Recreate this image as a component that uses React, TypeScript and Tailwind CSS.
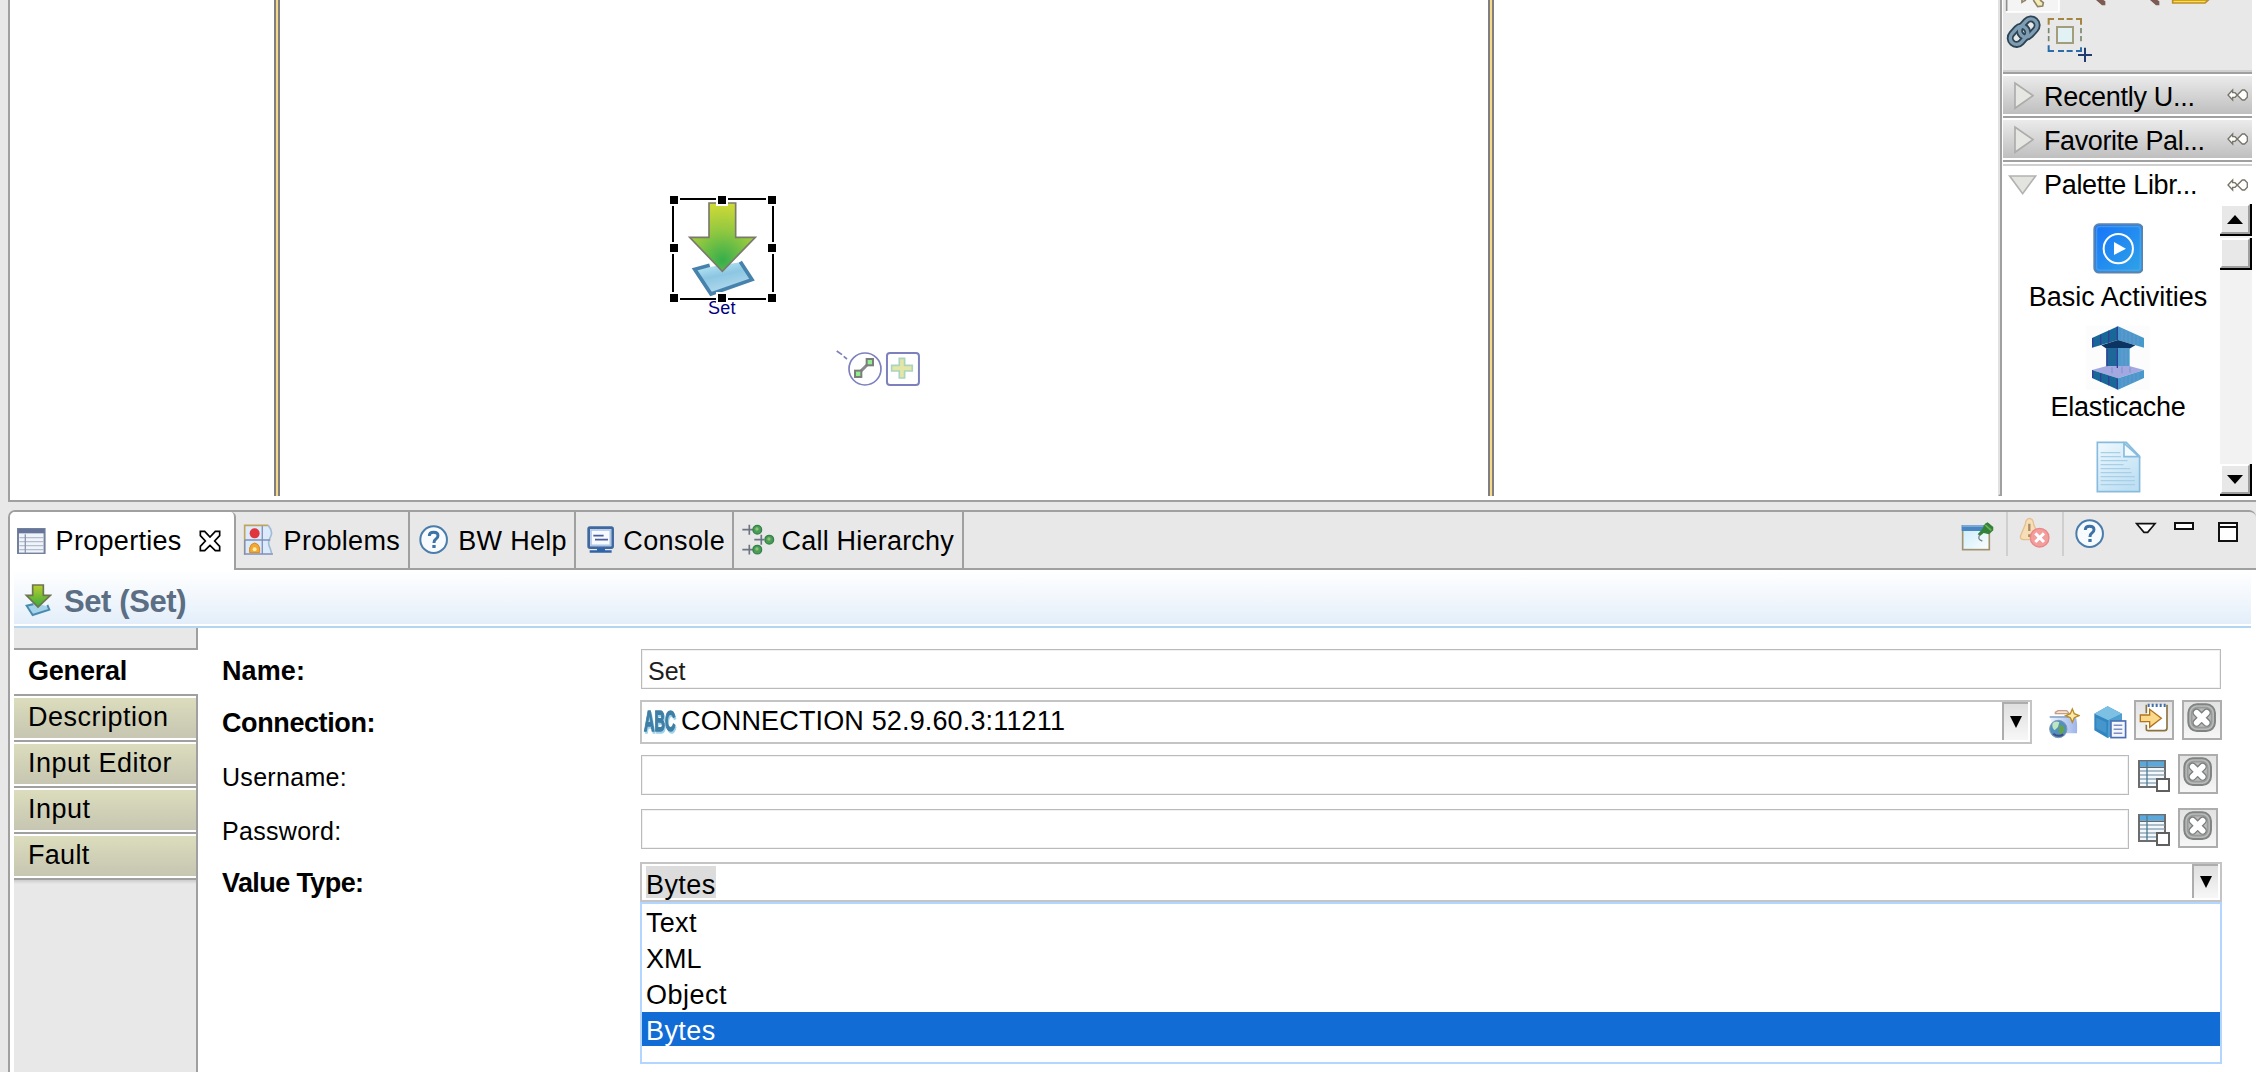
import type { ReactNode } from "react";

type IconProps = { box: string; w: number; h: number; className?: string; children: ReactNode };

function Icon({ box, w, h, className, children }: IconProps) {
  return (
    <svg viewBox={box} width={w} height={h} className={`block shrink-0 ${className ?? ""}`}>
      {children}
    </svg>
  );
}

/* ---------- canvas ---------- */

function SetArrowIcon({ w, h }: { w: number; h: number }) {
  return (
    <Icon box="140 62 216 292" w={w} h={h}>
      <defs>
        <radialGradient id="arrowFill" gradientUnits="userSpaceOnUse" cx="247" cy="240" r="180">
          <stop offset="0" stopColor="#35ae4c" />
          <stop offset="0.5" stopColor="#92c840" />
          <stop offset="1" stopColor="#d6dc35" />
        </radialGradient>
        <linearGradient id="sheetFill" x1="0" y1="0" x2="0.4" y2="1">
          <stop offset="0" stopColor="#c6f1fb" />
          <stop offset="0.5" stopColor="#8cc6e2" />
          <stop offset="1" stopColor="#b4daee" />
        </linearGradient>
      </defs>
      <path d="M163 267L300 246L335 298L212 341Z" fill="url(#sheetFill)" />
      <path d="M208 255L163 267L212 341L335 298L300 244" fill="none" stroke="#4682ab" strokeWidth="11" />
      <path d="M206 68H286V171H345L246 273L148 171H206Z" fill="url(#arrowFill)" stroke="#7a7a6c" strokeWidth="5" />
    </Icon>
  );
}

function Handle({ className }: { className: string }) {
  return <i className={`absolute box-content size-2 border-2 border-white bg-black ${className}`} />;
}

function SetNode() {
  return (
    <div className="absolute left-[672px] top-[198px] h-[102px] w-[102px] border-2 border-black">
      <div className="absolute left-[13px] top-[1px]">
        <SetArrowIcon w={72} h={97.3} />
      </div>
      <span className="absolute left-[34px] top-[98px] text-[18px] leading-5 tracking-[0.2px] text-[#00007f]">Set</span>
      <Handle className="-left-[6px] -top-[6px]" />
      <Handle className="left-[42px] -top-[6px]" />
      <Handle className="left-[92px] -top-[6px]" />
      <Handle className="-left-[6px] top-[42px]" />
      <Handle className="left-[92px] top-[42px]" />
      <Handle className="-left-[6px] top-[92px]" />
      <Handle className="left-[42px] top-[92px]" />
      <Handle className="left-[92px] top-[92px]" />
    </div>
  );
}

function NodeActions() {
  return (
    <div className="absolute left-[836px] top-[350px]">
      <Icon box="588 510 256 112" w={85.3} h={37.3}>
        <path d="M590 513L606 524M611 529L621 537" stroke="#7d80bd" strokeWidth="5" />
        <circle cx="675" cy="567" r="48" fill="#fff" stroke="#7d80bd" strokeWidth="5" />
        <path d="M655 581L690 546" stroke="#8a8a8a" strokeWidth="9" />
        <rect x="645" y="572" width="19" height="19" fill="#8df08d" stroke="#7c7c7c" strokeWidth="6" />
        <rect x="680" y="537" width="19" height="19" fill="#8df08d" stroke="#7c7c7c" strokeWidth="6" />
        <rect x="741" y="519" width="96" height="96" rx="9" fill="#fff" stroke="#7d80bd" strokeWidth="6" />
        <path
          d="M778 535H794V556H817V573H794V594H778V573H755V556H778Z"
          fill="#e4e6a6"
          stroke="#aad4c0"
          strokeWidth="5"
        />
      </Icon>
    </div>
  );
}

function LaneLine() {
  return <div className="h-[496px] w-[6px] shrink-0 border-x-2 border-[#808080] bg-[#f5d88c]" />;
}

/* ---------- palette ---------- */

function PaletteToolbar() {
  return (
    <div className="h-[70px] bg-[#e8e8e8]">
      <Icon box="39 0 747 210" w={249} h={70}>
        <path d="M51 0V36H207V0" fill="#f4f4f4" stroke="#fff" strokeWidth="5" />
        <path d="M50 0V33" stroke="#8f8f8f" strokeWidth="5" />
        <path d="M96 0V7L104 2L108 0M130 0L143 20L158 18L160 8L150 0" fill="#f5ecb4" stroke="#8d846c" strokeWidth="5" />
        <path d="M318 0L336 16H346V4L340 0ZM480 0L498 16H508V4L502 0Z" fill="#7d5a52" />
        <path d="M548 0V9H645L655 0Z" fill="#ffdf3f" stroke="#bd8e28" strokeWidth="5" />
        <g fill="none">
          <g stroke="#2c4454" strokeWidth="21">
            <rect x="-19" y="-30" width="38" height="60" rx="19" transform="translate(87 106) rotate(42)" />
            <rect x="-19" y="-30" width="38" height="60" rx="19" transform="translate(115 84) rotate(42)" />
          </g>
          <g stroke="#7f9db2" strokeWidth="10">
            <rect x="-19" y="-30" width="38" height="60" rx="19" transform="translate(87 106) rotate(42)" />
            <rect x="-19" y="-30" width="38" height="60" rx="19" transform="translate(115 84) rotate(42)" />
          </g>
        </g>
        <path d="M176 74V57H192M204 57H222M230 57H248M258 57H273V74" fill="none" stroke="#a4853f" strokeWidth="6" />
        <path d="M176 84V100M273 84V100M176 108V124M273 108V124" stroke="#77866f" strokeWidth="5" />
        <path d="M176 136V153H192M204 153H222M230 153H248M258 153H273V142" fill="none" stroke="#2c6ca8" strokeWidth="6" />
        <rect x="201" y="81" width="48" height="48" fill="#e2f1f4" stroke="#a29e7b" strokeWidth="6" />
        <path d="M285 143V186M264 165H306" stroke="#213c70" strokeWidth="6" />
      </Icon>
    </div>
  );
}

function PinIcon() {
  return (
    <Icon box="707 270 64 42" w={21.3} h={14} className="ml-auto mr-[5px]">
      <path
        d="M710 291L724 276V284H731L746 299L753 306H760L768 298V284L760 276H753L731 298H724V306Z"
        fill="#fff"
        stroke="#777468"
        strokeWidth="4"
      />
    </Icon>
  );
}

function Drawer({ label, open, text }: { label: string; open?: boolean; text: string }) {
  return (
    <div
      className={`flex h-[38px] w-[250px] items-center ${open ? "bg-white" : "bg-linear-to-b from-[#ebebeb] to-[#bfbfbf]"}`}
    >
      <div className="w-[41px] shrink-0">
        {open ? (
          <Icon box="52 524 88 64" w={29.3} h={21.3} className="ml-[5px]">
            <path d="M57 530H135L96 583Z" fill="#e3e4df" stroke="#b2b2b0" strokeWidth="5" />
          </Icon>
        ) : (
          <Icon box="68 244 64 88" w={21.3} h={29.3} className="ml-[10px] mt-[2px]">
            <path d="M74 250V326L128 288Z" fill="#e6e7e2" stroke="#acacaa" strokeWidth="5" />
          </Icon>
        )}
      </div>
      <span className={`whitespace-nowrap text-[27px] ${text}`}>{label}</span>
      <PinIcon />
    </div>
  );
}

function ScrollButton({ children }: { children?: ReactNode }) {
  return (
    <div className="h-8 w-8 border-b-2 border-r-2 border-black">
      <div className="flex h-full w-full items-center justify-center border-2 border-b-[#a0a0a0] border-l-white border-r-[#a0a0a0] border-t-white bg-[#e8e8e8]">
        {children}
      </div>
    </div>
  );
}

function Scrollbar() {
  return (
    <div className="flex w-8 shrink-0 flex-col bg-[#f2f2f2]">
      <ScrollButton>
        <Icon box="0 0 16 9" w={16} h={9}>
          <path d="M0 9L8 0L16 9Z" />
        </Icon>
      </ScrollButton>
      <div className="mt-[2px]">
        <ScrollButton />
      </div>
      <div className="mt-auto">
        <ScrollButton>
          <Icon box="0 0 16 9" w={16} h={9}>
            <path d="M0 0L8 9L16 0Z" />
          </Icon>
        </ScrollButton>
      </div>
    </div>
  );
}

function BasicActivitiesIcon() {
  return (
    <Icon box="310 70 152 152" w={50.6} h={50.6}>
      <defs>
        <linearGradient id="basicFill" x1="0" y1="0" x2="1" y2="1">
          <stop offset="0" stopColor="#1674fb" />
          <stop offset="1" stopColor="#2fa4e6" />
        </linearGradient>
      </defs>
      <rect x="314" y="74" width="145" height="145" rx="14" fill="url(#basicFill)" stroke="#5d83ad" strokeWidth="6" />
      <rect x="321" y="81" width="131" height="131" rx="8" fill="none" stroke="#5aa9ef" strokeWidth="4" opacity=".6" />
      <circle cx="386" cy="147" r="44" fill="none" stroke="#fff" strokeWidth="6" />
      <path d="M373 127V166L409 147Z" fill="#fff" />
    </Icon>
  );
}

function ElasticacheIcon() {
  return (
    <Icon box="288 378 192 192" w={64} h={64}>
      <rect x="288" y="378" width="192" height="192" fill="#fcfcfc" />
      <path d="M306 414L384 379V420L306 443Z" fill="#176896" />
      <path d="M384 379L462 414V443L384 420Z" fill="#459acb" />
      <path d="M334 436L384 420L436 436L418 446H350Z" fill="#0b3463" />
      <path d="M349 444H384V506L349 500Z" fill="#1d6899" />
      <path d="M384 444H419V500L384 506Z" fill="#4a9ccd" />
      <path d="M306 510L350 498H418L462 510L384 535Z" fill="#a3a8e0" />
      <path d="M306 510L384 535V569L306 534Z" fill="#176896" />
      <path d="M462 510L384 535V569L462 534Z" fill="#459acb" />
      <path
        d="M308 414V442M332 404V435M356 392V428M382 380V420M308 511V534M332 520V545M356 528V556M382 536V568M351 446V499M382 446V504"
        stroke="#333c9c"
        strokeWidth="4"
      />
      <path
        d="M396 386V422M408 392V426M420 397V429M432 402V433M444 408V436M396 534V562M408 530V557M420 526V551M432 521V546M444 517V540M396 446V500M408 446V498M366 502V520M396 502V520M420 502V518"
        stroke="#7c90cc"
        strokeWidth="3"
      />
    </Icon>
  );
}

function DocumentIcon() {
  return (
    <Icon box="314 724 140 156" w={46.6} h={52}>
      <defs>
        <linearGradient id="docFill" x1="0" y1="0" x2="0.6" y2="1">
          <stop offset="0" stopColor="#eff9fe" />
          <stop offset="1" stopColor="#bfe0f3" />
        </linearGradient>
      </defs>
      <path d="M321 728H408L448 770V876H321Z" fill="url(#docFill)" stroke="#87bcdf" strokeWidth="5" />
      <path d="M401 730V771H446Z" fill="#f3fbff" stroke="#87bcdf" strokeWidth="5" />
      <path
        d="M331 759H390M331 771H392M331 783H412M331 795H400M331 807H420M331 819H424M331 831H434M331 843H434M331 855H434"
        stroke="#a8cfe8"
        strokeWidth="4"
      />
    </Icon>
  );
}

function Palette() {
  return (
    <div className="flex w-[258px] shrink-0 flex-col">
      <div className="flex h-[496px]">
        <div className="w-1 shrink-0 border-b-2 border-l-2 border-r-2 border-b-[#a0a0a0] border-l-[#e2e2e2] border-r-[#a0a0a0]" />
        <div className="ml-px flex w-[249px] flex-col overflow-hidden">
          <PaletteToolbar />
          <div className="h-[6px] shrink-0 border-b-2 border-t-2 border-b-white border-t-[#d0d0d0] bg-[#a0a0a0]" />
          <Drawer label="Recently U..." text="mt-[3px] leading-[38px] tracking-[-0.3px]" />
          <div className="my-[2px] h-[2px] shrink-0 bg-[#a0a0a0]" />
          <Drawer label="Favorite Pal..." text="mt-[3px] leading-[38px] tracking-[-0.4px]" />
          <div className="my-[2px] h-[2px] shrink-0 bg-[#a0a0a0]" />
          <div className="h-[2px] shrink-0 bg-[#d0d0d0]" />
          <Drawer label="Palette Libr..." open text="leading-[38px] tracking-[-0.3px]" />
          <div className="flex min-h-0 flex-1">
            <div className="flex w-[217px] shrink-0 flex-col items-center pl-[13px] pt-[19px]">
              <BasicActivitiesIcon />
              <span className="mt-[5px] whitespace-nowrap text-[27px] leading-[36px]">Basic Activities</span>
              <div className="mt-[11px]">
                <ElasticacheIcon />
              </div>
              <span className="-mt-px whitespace-nowrap text-[27px] leading-[36px] tracking-[-0.3px]">Elasticache</span>
              <div className="mt-4">
                <DocumentIcon />
              </div>
            </div>
            <Scrollbar />
          </div>
        </div>
      </div>
    </div>
  );
}

function Editor() {
  return (
    <div className="flex h-[502px] shrink-0 bg-[#e8e8e8] pl-2">
      <div className="flex min-w-0 flex-1 border-b-2 border-l-2 border-[#a0a0a0] bg-white">
        <div className="flex flex-1">
          <div className="w-[264px]" />
          <LaneLine />
          <div className="w-[1208px]" />
          <LaneLine />
        </div>
        <Palette />
      </div>
    </div>
  );
}

/* ---------- tab bar ---------- */

function PropertiesIcon() {
  return (
    <Icon box="53 137 86 80" w={28.6} h={26.6}>
      <rect x="56" y="140" width="80" height="74" fill="#eff3fa" stroke="#74809d" strokeWidth="6" />
      <rect x="56" y="140" width="80" height="13" fill="#65759a" />
      <path d="M60 166H134M60 178H134M60 190H134M60 202H134" stroke="#b4bccd" strokeWidth="4" />
      <path d="M78 156V212" stroke="#8d97ae" strokeWidth="4" />
    </Icon>
  );
}

function CloseIcon() {
  return (
    <Icon box="597 147 66 66" w={22} h={22}>
      <path
        d="M601 151H614L630 168L646 151H659V164L644 180L659 196V209H646L630 193L614 209H601V196L616 180L601 164Z"
        fill="#fff"
        stroke="#000"
        strokeWidth="5"
      />
    </Icon>
  );
}

function ProblemsIcon() {
  return (
    <Icon box="730 130 92 96" w={30.6} h={32}>
      <path d="M735 134H810Q822 156 812 170Q802 186 814 204L820 222H735Z" fill="#dcebfb" />
      <path d="M735 222V134H806" fill="none" stroke="#c0a35e" strokeWidth="5" />
      <path d="M806 134Q822 154 812 170Q802 186 812 204L816 218" fill="none" stroke="#a3bcd6" strokeWidth="5" />
      <path d="M735 178V220H820M736 178H812M788 136V218" fill="none" stroke="#8090b8" strokeWidth="4" />
      <circle cx="765" cy="158" r="15" fill="#e0353d" />
      <path d="M750 216V202Q753 189 765 187Q777 189 780 202V216Z" fill="#f3a836" stroke="#d88920" strokeWidth="3" />
      <circle cx="765" cy="206" r="6" fill="#fff0a8" />
    </Icon>
  );
}

function HelpIcon() {
  return (
    <Icon box="1258 136 88 88" w={29.3} h={29.3}>
      <circle cx="1302" cy="180" r="40" fill="#f8fbfe" stroke="#4a7dac" strokeWidth="6" />
      <path
        d="M1289 169Q1289 158 1302 158Q1315 158 1315 168Q1315 174 1308 179Q1303 182 1303 190"
        fill="none"
        stroke="#3c72a5"
        strokeWidth="9"
      />
      <rect x="1298" y="196" width="10" height="9" fill="#3c72a5" />
    </Icon>
  );
}

function ConsoleIcon() {
  return (
    <Icon box="322 136 82 82" w={27.3} h={27.3}>
      <rect x="327" y="141" width="72" height="60" rx="4" fill="#f7faff" stroke="#3f689f" strokeWidth="8" />
      <rect x="334" y="148" width="58" height="46" fill="none" stroke="#b0c6e6" strokeWidth="5" />
      <path d="M341 165H372M346 177H385" stroke="#4b5c9b" strokeWidth="5" />
      <path d="M352 203H376V209H396V216H330V209H352Z" fill="#2f64a8" />
    </Icon>
  );
}

function CallHierarchyIcon() {
  return (
    <Icon box="785 130 98 94" w={32.6} h={31.3}>
      <path d="M786 147H820M807 132V162M822 177H852M843 162V192M786 207H820M807 192V222" stroke="#6d7484" strokeWidth="5" />
      <g fill="#4d9c55" stroke="#32824b" strokeWidth="4">
        <circle cx="831" cy="147" r="13" />
        <circle cx="867" cy="177" r="13" />
        <circle cx="831" cy="207" r="13" />
      </g>
      <g fill="#8cc47a">
        <circle cx="830" cy="145" r="5" />
        <circle cx="866" cy="175" r="5" />
        <circle cx="830" cy="205" r="5" />
      </g>
    </Icon>
  );
}

function Tab({ icon, label, className, text }: { icon: ReactNode; label: string; className: string; text: string }) {
  return (
    <div className={`flex h-[58px] items-center border-b-2 border-r-2 border-[#a0a0a0] ${className}`}>
      {icon}
      <span className={`mt-[2px] whitespace-nowrap text-[27px] leading-[54px] ${text}`}>{label}</span>
    </div>
  );
}

function ViewToolbar() {
  return (
    <div className="flex flex-1 items-start border-b-2 border-[#a0a0a0]">
      <Icon box="64 92 100 90" w={33.3} h={30} className="ml-[997px] mt-[9px]">
        <defs>
          <linearGradient id="pinWin" x1="0" y1="0" x2="1" y2="1">
            <stop offset="0" stopColor="#c9ecfb" />
            <stop offset="1" stopColor="#fdfeff" />
          </linearGradient>
        </defs>
        <rect x="69" y="107" width="80" height="71" fill="url(#pinWin)" stroke="#a09370" strokeWidth="5" />
        <rect x="66" y="104" width="66" height="18" fill="#4a86c2" />
        <path d="M68 107H130" stroke="#8db5dc" strokeWidth="5" />
        <path d="M114 132L128 116L136 100L144 96L161 110V120L148 132L132 128L122 136Z" fill="#338238" />
        <path d="M137 104L155 120" stroke="#6bb35b" strokeWidth="5" />
        <path d="M120 134Q112 148 128 152" fill="none" stroke="#76828e" strokeWidth="4" />
      </Icon>
      <div className="ml-3 h-11 w-[2px] bg-[#cfcfcf]" />
      <Icon box="238 82 94 96" w={31.3} h={32} className="ml-[11px] mt-[5px]">
        <path
          d="M269 86Q258 88 257 104L242 140Q242 150 252 150H290Q298 144 294 132L282 104Q282 88 269 86Z"
          fill="#f6deb7"
          stroke="#e6bf90"
          strokeWidth="4"
        />
        <path d="M269 102V124M269 134V142" stroke="#ab8b64" strokeWidth="7" />
        <circle cx="300" cy="144" r="28" fill="#f39d9d" stroke="#e98787" strokeWidth="4" />
        <path d="M287 131L313 157M313 131L287 157" stroke="#fff" strokeWidth="9" />
      </Icon>
      <div className="ml-[11px] h-11 w-[2px] bg-[#cfcfcf]" />
      <div className="ml-[11px] mt-[7px]">
        <HelpIcon />
      </div>
      <Icon box="586 98 66 36" w={22} h={12} className="ml-[31px] mt-[10px]">
        <path d="M591 103H646L624 129H613Z" fill="#fff" stroke="#111" strokeWidth="5" />
      </Icon>
      <div className="ml-[17px] mt-[10px] h-2 w-5 border-2 border-[#111] bg-white" />
      <div className="ml-6 mt-[10px] h-5 w-5 border-2 border-[#111] bg-white">
        <div className="mt-[2px] h-[2px] bg-[#111]" />
      </div>
    </div>
  );
}

function TabBar() {
  return (
    <div className="flex h-[60px] shrink-0 overflow-hidden rounded-tl-[7px] rounded-tr-[7px] border-l-2 border-t-2 border-[#a0a0a0] bg-[#e8e8e8]">
      <div className="flex h-[58px] w-[226px] shrink-0 items-center rounded-tr-[5px] border-r-2 border-[#a0a0a0] bg-white pl-[7px]">
        <PropertiesIcon />
        <span className="ml-[10px] whitespace-nowrap text-[27px] leading-[56px] tracking-[0.3px]">Properties</span>
        <div className="ml-auto mr-[13px]">
          <CloseIcon />
        </div>
      </div>
      <Tab icon={<ProblemsIcon />} label="Problems" className="w-[174px] pl-[7px]" text="ml-[10px] tracking-[0.3px]" />
      <Tab icon={<HelpIcon />} label="BW Help" className="w-[166px] pl-[9px]" text="ml-[10px] tracking-[0.3px]" />
      <Tab icon={<ConsoleIcon />} label="Console" className="w-[158px] pl-[11px]" text="ml-[9px] tracking-[0.4px]" />
      <Tab icon={<CallHierarchyIcon />} label="Call Hierarchy" className="w-[230px] pl-[8px]" text="ml-[7px] tracking-[0.2px]" />
      <ViewToolbar />
    </div>
  );
}

/* ---------- properties view ---------- */

function SideTab({ label, text }: { label: string; text: string }) {
  return (
    <div className="h-[46px] border-b-2 border-r-2 border-[#a0a0a0] bg-white py-[2px]">
      <div className={`h-10 bg-linear-to-b from-[#dcdcbd] to-[#c6c6b2] pl-[14px] text-[27px] leading-[39px] ${text}`}>{label}</div>
    </div>
  );
}

function Sidebar() {
  return (
    <div className="flex w-[184px] shrink-0 flex-col">
      <div className="h-[22px] border-b-2 border-[#a0a0a0] bg-white">
        <div className="h-5 border-r-2 border-[#a0a0a0] bg-[#e8e8e8]" />
      </div>
      <div className="h-[46px] border-b-2 border-[#a0a0a0] bg-white pl-[14px] text-[27px] font-bold leading-[43px] tracking-[-0.2px]">
        General
      </div>
      <SideTab label="Description" text="tracking-[0.5px]" />
      <SideTab label="Input Editor" text="tracking-[0.5px]" />
      <SideTab label="Input" text="tracking-[0.5px]" />
      <SideTab label="Fault" text="tracking-[0.3px]" />
      <div className="flex-1 border-r-2 border-[#a0a0a0] bg-[#e8e8e8]">
        <div className="h-1 bg-linear-to-b from-[#cccccc] to-[#e8e8e8]" />
      </div>
    </div>
  );
}

function ClearButton() {
  return (
    <div className="flex size-10 shrink-0 justify-center border-2 border-[#adadad] bg-linear-to-b from-[#e2e2e2] to-[#f6f6f6] pt-[1px]">
      <Icon box="621 190 88 88" w={29.3} h={29.3}>
        <rect x="625" y="194" width="80" height="80" rx="26" fill="#b9bbba" stroke="#7f8381" strokeWidth="6" />
        <rect x="635" y="204" width="60" height="60" rx="18" fill="none" stroke="#979b99" strokeWidth="5" />
        <path
          d="M650 219L680 249M680 219L650 249"
          stroke="#7a7e7c"
          strokeWidth="25"
          strokeLinecap="round"
        />
        <path d="M650 219L680 249M680 219L650 249" stroke="#fff" strokeWidth="17" strokeLinecap="round" />
      </Icon>
    </div>
  );
}

function TableIcon() {
  return (
    <Icon box="474 360 96 96" w={32} h={32}>
      <rect x="477" y="363" width="78" height="78" fill="#f5f8fa" stroke="#6d6d6d" strokeWidth="6" />
      <rect x="480" y="364" width="72" height="16" fill="#5ba9dc" />
      <path d="M477 382H555" stroke="#5f6970" strokeWidth="4" />
      <path d="M480 393H553M480 405H553M480 417H553M480 429H553" stroke="#a9bdca" strokeWidth="6" />
      <path d="M501 364V440" stroke="#4c7a94" strokeWidth="4" />
      <rect x="531" y="417" width="36" height="36" fill="#fff" stroke="#5f5f5f" strokeWidth="6" />
    </Icon>
  );
}

function NewConnectionIcon() {
  return (
    <Icon box="206 200 96 96" w={32} h={32}>
      <defs>
        <linearGradient id="folderFill" x1="0" y1="0" x2="1" y2="0">
          <stop offset="0" stopColor="#eef6ff" />
          <stop offset="1" stopColor="#9db4ea" />
        </linearGradient>
      </defs>
      <path d="M228 216L236 211H262L270 220H228Z" fill="#f3e4d8" stroke="#c79d8a" strokeWidth="4" />
      <path d="M211 228H288Q295 240 293 279H226Z" fill="url(#folderFill)" />
      <path d="M211 230H272" stroke="#8aa9c8" strokeWidth="5" />
      <circle cx="237" cy="266" r="26" fill="#5191bd" stroke="#8398b5" strokeWidth="3" />
      <path d="M220 248Q230 240 240 246L236 260L226 270Q216 262 220 248Z" fill="#bfe5c4" />
      <path d="M240 254Q254 254 256 268L246 284L238 276Z" fill="#67a34e" />
      <path d="M222 280Q236 292 252 282" fill="none" stroke="#3c4f8c" strokeWidth="6" />
      <path d="M279 206L285 220L299 226L285 232L279 246L273 232L259 226L273 220Z" fill="#fbe9a6" stroke="#b98a29" strokeWidth="4" />
    </Icon>
  );
}

function CubeIcon() {
  return (
    <Icon box="341 197 98 98" w={32.6} h={32.6}>
      <path d="M342 220L382 198L425 220V268L382 293L342 270Z" fill="#3186c0" />
      <path d="M342 220L382 198L425 220L384 240Z" fill="#7cc1e4" />
      <path d="M384 240L425 220V268L382 293Z" fill="#4f9fd0" />
      <path d="M348 232L378 246V280L348 264Z" fill="#4596cc" />
      <rect x="392" y="242" width="44" height="50" fill="#f4f7ff" stroke="#4c6fb4" strokeWidth="5" />
      <path d="M400 255H426M400 267H426M400 279H426" stroke="#7e8fc4" strokeWidth="5" />
    </Icon>
  );
}

function GotoButton() {
  return (
    <div className="flex size-10 shrink-0 justify-center border-2 border-[#adadad] bg-linear-to-b from-[#e2e2e2] to-[#f6f6f6]">
      <Icon box="478 188 90 90" w={30} h={30}>
        <path d="M500 196H563V266Q563 273 556 273H500Z" fill="#fdfeff" />
        <path d="M500 196V222M500 256V270Q500 274 506 274H554Q562 274 562 266V196" fill="none" stroke="#8a7340" strokeWidth="5" />
        <path d="M504 198H562" stroke="#3f6ea8" strokeWidth="10" strokeDasharray="6 6" />
        <path d="M482 227H510V210L545 237L510 264V247H482Z" fill="#fbd98a" stroke="#b3731c" strokeWidth="4" />
      </Icon>
    </div>
  );
}

function DropButton({ className }: { className: string }) {
  return (
    <div
      className={`flex w-[26px] items-center justify-center border-l-2 border-t-2 border-[#adadad] bg-linear-to-b from-[#dfdfdf] to-[#f7f7f7] ${className}`}
    >
      <Icon box="0 0 12 12" w={12} h={12}>
        <path d="M0 0H12L6 12Z" />
      </Icon>
    </div>
  );
}

function TextField({ className, children }: { className: string; children?: ReactNode }) {
  return (
    <div
      className={`h-10 border border-[#bababa] bg-white pl-[6px] pt-[2px] text-[25px] leading-[38px] text-[#1e1e1e] shadow-[inset_0_0_0_1px_#f1f1f1] ${className}`}
    >
      {children}
    </div>
  );
}

function Row({ label, className, text, children }: { label: string; className: string; text: string; children: ReactNode }) {
  return (
    <div className={`flex shrink-0 items-start ${className}`}>
      <div className={`w-[418px] shrink-0 whitespace-nowrap leading-8 ${text}`}>{label}</div>
      {children}
    </div>
  );
}

const OPTIONS = [
  { label: "Text", text: "tracking-[0.3px]" },
  { label: "XML", text: "tracking-[0px]" },
  { label: "Object", text: "tracking-[0.5px]" },
];

function CredentialRow({ label, className, text }: { label: string; className: string; text: string }) {
  return (
    <Row label={label} className={className} text={`pt-[6px] text-[25px] ${text}`}>
      <TextField className="ml-px w-[1488px]" />
      <div className="ml-[9px] mt-[5px]">
        <TableIcon />
      </div>
      <div className="-mt-px ml-2">
        <ClearButton />
      </div>
    </Row>
  );
}

function Form() {
  return (
    <div className="flex flex-1 flex-col bg-white pl-6 pt-[21px]">
      <Row label="Name:" className="h-[51px]" text="pt-[6px] text-[27px] font-bold tracking-[0.1px]">
        <TextField className="ml-px w-[1580px]">Set</TextField>
      </Row>

      <Row label="Connection:" className="h-[55px]" text="pt-[7px] text-[27px] font-bold tracking-[-0.4px]">
        <div className="flex h-11 w-[1392px] border-2 border-[#c4c4c4] bg-white">
          <div className="ml-[2px] h-10 w-[33px] shrink-0 drop-shadow-[1px_2px_0_#9fd2ea]">
            <span className="block w-[62px] origin-left scale-x-[0.5] text-[29px] font-bold leading-[39px] text-[#3f7ea5] [-webkit-text-stroke:1.5px_#3f7ea5]">
              ABC
            </span>
          </div>
          <span className="ml-1 whitespace-nowrap text-[27px] leading-[39px] tracking-[0.15px]">CONNECTION 52.9.60.3:11211</span>
          <DropButton className="ml-auto mr-[2px] h-[38px]" />
        </div>
        <div className="ml-4 mt-[7px]">
          <NewConnectionIcon />
        </div>
        <div className="ml-[14px] mt-[6px]">
          <CubeIcon />
        </div>
        <div className="ml-[7px]">
          <GotoButton />
        </div>
        <div className="ml-2">
          <ClearButton />
        </div>
      </Row>

      <CredentialRow label="Username:" className="h-[54px]" text="tracking-[0.3px]" />
      <CredentialRow label="Password:" className="h-[53px]" text="tracking-[0.3px]" />

      <Row label="Value Type:" className="h-[40px]" text="pt-[5px] text-[27px] font-bold tracking-[-0.6px]">
        <div className="flex h-10 w-[1582px] border-2 border-[#c4c4c4] bg-white">
          <span className="ml-1 mt-[2px] h-8 w-[70px] bg-[#dcdcdc] text-[27px] leading-[39px] tracking-[0.4px]">Bytes</span>
          <DropButton className="ml-auto mr-[2px] h-[34px]" />
        </div>
      </Row>

      <div className="ml-[418px] h-[162px] w-[1582px] shrink-0 border-2 border-[#b2d6ff] bg-white text-[27px] leading-[39px]">
        {OPTIONS.map((o) => (
          <div key={o.label} className={`h-9 pl-1 ${o.text}`}>
            {o.label}
          </div>
        ))}
        <div className="h-[34px] bg-[#116cd6] pl-1 tracking-[0.4px] text-white">Bytes</div>
      </div>
    </div>
  );
}

function PropertiesView() {
  return (
    <div className="flex min-h-0 flex-1 flex-col bg-[#e8e8e8] pl-2 pt-2">
      <TabBar />
      <div className="flex min-h-0 flex-1 flex-col border-l-2 border-[#a0a0a0] bg-white pl-1">
        <div className="mr-[5px] h-[58px] shrink-0 border-b-2 border-[#b3d5f2] pb-[2px]">
          <div className="flex h-[54px] items-start bg-linear-to-b from-white via-[#f2f7fc] to-[#e3eefa]">
            <div className="ml-[10px] mt-[13px]">
              <Icon box="72 308 84 102" w={28} h={34}>
                <path d="M82 374L104 366L146 380L148 390L100 404Z" fill="#a5d3ea" />
                <path d="M100 372L80 376L98 404L148 388L142 374" fill="none" stroke="#4a8aae" strokeWidth="6" />
                <defs>
                  <linearGradient id="miniArrow" x1="0" y1="0" x2="0" y2="1">
                    <stop offset="0" stopColor="#b9cf2f" />
                    <stop offset="1" stopColor="#3aaa3c" />
                  </linearGradient>
                </defs>
                <path d="M98 314H130V345H151L114 380L79 345H98Z" fill="url(#miniArrow)" stroke="#6d7450" strokeWidth="5" />
              </Icon>
            </div>
            <span className="ml-3 whitespace-nowrap text-[31px] font-bold leading-[63px] tracking-[-0.4px] text-[#5b6e83]">
              Set (Set)
            </span>
          </div>
        </div>
        <div className="flex min-h-0 flex-1">
          <Sidebar />
          <Form />
        </div>
      </div>
    </div>
  );
}

export default function App() {
  return (
    <div className="relative flex h-[1072px] w-[2256px] flex-col overflow-hidden bg-white font-['Liberation_Sans',Arial,sans-serif] text-black">
      <Editor />
      <SetNode />
      <NodeActions />
      <PropertiesView />
    </div>
  );
}
